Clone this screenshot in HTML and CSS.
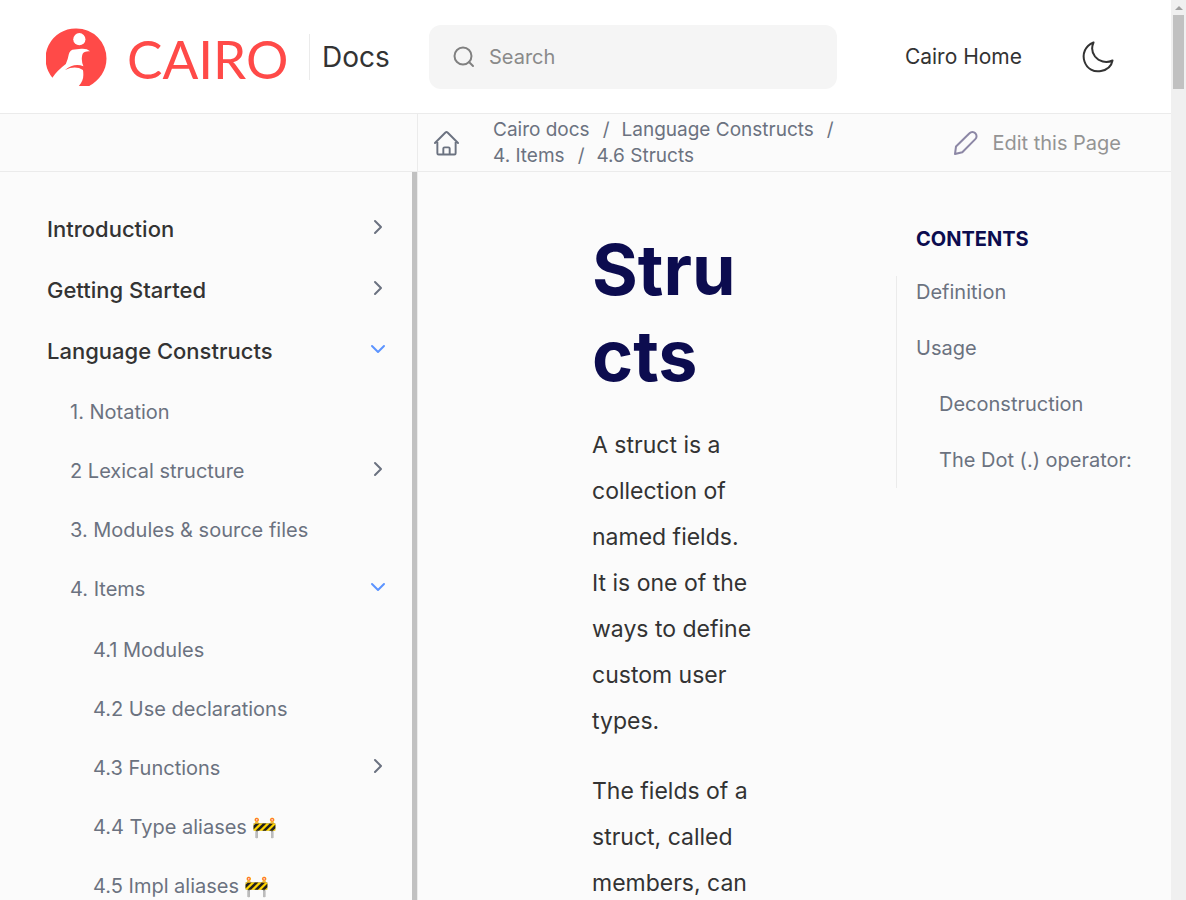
FILE: index.html
```html
<!DOCTYPE html>
<html lang="en">
<head>
<meta charset="utf-8">
<meta name="viewport" content="width=device-width, initial-scale=1">
<title>Structs :: Cairo Docs</title>
<link rel="stylesheet" href="styles.css">
</head>
<body>
<div class="frame">
  <div class="page">
    <header class="header">
      <div class="brand">
        <a class="logo" href="#">
          <svg class="logo-mark" viewBox="0 0 60 57" aria-hidden="true">
            <path fill="#ff4a48" d="M30 0.500A29.500 29.500 0 0 1 59.500 30C59.500 42 52.500 51.500 42.500 57H32.300C35.500 53.500 36.700 50 36.700 46.500Q36.800 43 36.300 41.200Q29 36.500 18.700 41.200Q27.500 34 36.800 37.500Q34.800 33 35.300 28.800Q35.500 24.500 38 23.500Q40.500 22.500 43.300 22.800Q40 20 34.700 20.500L28 21Q23.500 21.200 22.500 25.500Q21.500 31 19.500 35.500Q11 42 6.300 48.800A29.500 29.500 0 0 1 30 0.500Z"/>
            <circle cx="32.800" cy="11" r="6" fill="#fff"/>
          </svg>
          <span class="logo-word">CAIRO</span>
        </a>
        <a class="docs" href="#">Docs</a>
      </div>
      <label class="search">
        <svg class="search-icon" viewBox="0 0 22 22" aria-hidden="true"><circle cx="10" cy="10" r="8.500"/><path d="M16 16l4 4"/></svg>
        <input class="search-input" type="text" placeholder="Search" aria-label="Search">
      </label>
      <a class="home-link" href="#">Cairo Home</a>
      <button class="theme" type="button" aria-label="Dark theme">
        <svg viewBox="0 0 32 32" aria-hidden="true"><path d="M11.500 1.500C3 5 0 13 2.500 20.500C5 28 12 31.500 19 30C25 28.800 29.500 25 30.500 19.500C24 22.500 17 20.500 13 15.500C10 11.500 9.500 6 11.500 1.500Z"/></svg>
      </button>
    </header>
    <div class="toolbar">
      <div class="toolbar-main">
        <a class="home-icon" href="#" aria-label="Home">
          <svg viewBox="0 0 26 26" aria-hidden="true"><path d="M1 12.500L11.900 1.600a1.500 1.500 0 0 1 2.200 0L25 12.500M3.500 10v13.200a1.300 1.300 0 0 0 1.300 1.300h16.400a1.300 1.300 0 0 0 1.300-1.300V10M9.700 24.500v-6.200a1.300 1.300 0 0 1 1.300-1.300h4a1.300 1.300 0 0 1 1.300 1.300v6.200"/></svg>
        </a>
        <nav aria-label="Breadcrumb" class="crumbs">
          <ul class="crumb-list">
            <li class="crumb"><a href="#">Cairo docs</a></li>
            <li class="crumb"><a href="#">Language Constructs</a></li>
            <li class="crumb"><a href="#">4. Items</a></li>
            <li class="crumb"><a href="#">4.6 Structs</a></li>
          </ul>
        </nav>
        <a class="edit" href="#">
          <svg class="edit-icon" viewBox="0 0 24 24" aria-hidden="true"><path d="M1 23l1-7.500L15.500 2.300a4 4 0 0 1 5.800 0a4 4 0 0 1 0 5.800L8.300 21.300Z"/></svg>
          Edit this Page
        </a>
      </div>
    </div>
    <div class="body">
      <nav class="sidebar" aria-label="Documentation">
        <ul class="nav-list">
          <li><a class="nav-link top" href="#">Introduction<svg class="chev" viewBox="0 0 16 16"><path d="M5 2l6 6-6 6"/></svg></a></li>
          <li><a class="nav-link top" href="#">Getting Started<svg class="chev" viewBox="0 0 16 16"><path d="M5 2l6 6-6 6"/></svg></a></li>
          <li><a class="nav-link top" href="#">Language Constructs<svg class="chev open" viewBox="0 0 16 16"><path d="M2 5l6 6 6-6"/></svg></a>
            <ul class="nav-list nested">
              <li><a class="nav-link" href="#">1. Notation</a></li>
              <li><a class="nav-link" href="#">2 Lexical structure<svg class="chev" viewBox="0 0 16 16"><path d="M5 2l6 6-6 6"/></svg></a></li>
              <li><a class="nav-link" href="#">3. Modules &amp; source files</a></li>
              <li><a class="nav-link" href="#">4. Items<svg class="chev open" viewBox="0 0 16 16"><path d="M2 5l6 6 6-6"/></svg></a>
                <ul class="nav-list nested">
                  <li><a class="nav-link" href="#">4.1 Modules</a></li>
                  <li><a class="nav-link" href="#">4.2 Use declarations</a></li>
                  <li><a class="nav-link" href="#">4.3 Functions<svg class="chev" viewBox="0 0 16 16"><path d="M5 2l6 6-6 6"/></svg></a></li>
                  <li><a class="nav-link" href="#">4.4 Type aliases 🚧</a></li>
                  <li><a class="nav-link" href="#">4.5 Impl aliases 🚧</a></li>
                </ul>
              </li>
            </ul>
          </li>
        </ul>
      </nav>
      <main class="main">
        <article class="article">
          <h1>Structs</h1>
          <p>A struct is a collection of named fields. It is one of the ways to define custom user types.</p>
          <p>The fields of a struct, called members, can</p>
        </article>
        <aside class="toc">
          <h2>Contents</h2>
          <ul class="toc-list">
            <li><a href="#">Definition</a></li>
            <li><a href="#">Usage</a></li>
            <li class="sub"><a href="#">Deconstruction</a></li>
            <li class="sub"><a href="#">The Dot (.) operator:</a></li>
          </ul>
        </aside>
      </main>
    </div>
  </div>
  <div class="scrollbar" aria-hidden="true">
    <div class="scroll-arrow"></div>
    <div class="scroll-thumb"></div>
  </div>
</div>
</body>
</html>
```
FILE: styles.css
```css
* { box-sizing: border-box; }
body {
  margin: 0;
  font-family: Inter, "Liberation Sans", "Noto Color Emoji", sans-serif;
  font-size: 20px;
  color: #333;
  background: #fbfbfb;
}
a { color: inherit; text-decoration: none; }
ul { list-style: none; margin: 0; padding: 0; }
svg { display: block; fill: none; stroke: currentColor; stroke-linecap: round; stroke-linejoin: round; }

.frame { display: flex; height: 100vh; overflow: hidden; }
.page { flex: 1; min-width: 0; display: flex; flex-direction: column; }

.header {
  display: flex;
  align-items: center;
  flex: none;
  height: 114px;
  padding: 0 57px 0 46px;
  background: #fff;
  border-bottom: 1px solid #ebebeb;
}
.brand { display: flex; align-items: center; width: 383px; }
.logo { display: flex; align-items: center; gap: 20px; width: 263px; color: #ff4a48; }
.logo-mark { width: 61px; height: 58px; stroke: none; }
.logo-word { font: 53px/56px Lato, "Liberation Sans", sans-serif; padding-top: 4px; }
.docs { border-left: 1px solid #ebebeb; padding-left: 12px; font-size: 28px; line-height: 46px; }
.search {
  display: flex;
  align-items: center;
  gap: 14px;
  flex: 1;
  max-width: 408px;
  height: 64px;
  padding: 0 24px;
  border-radius: 12px;
  background: #f5f5f5;
  color: #808080;
}
.search-icon { width: 22px; height: 22px; flex: none; stroke-width: 2; }
.search-input { flex: 1; min-width: 0; border: 0; padding: 0; background: none; outline: 0; font: inherit; color: inherit; }
.search-input::placeholder { color: #8a8a8a; opacity: 1; }
.home-link { margin-left: auto; margin-right: 60px; font-size: 21px; }
.theme { border: 0; padding: 0; background: none; color: #333; }
.theme svg { width: 32px; height: 32px; stroke-width: 2; }

.toolbar { flex: none; display: flex; height: 58px; border-bottom: 1px solid #ebebeb; }
.toolbar-main {
  display: flex;
  align-items: center;
  flex: 1;
  margin-left: 417px;
  border-left: 1px solid #ebebeb;
  padding: 1px 50px 0 16px;
  color: #6b7280;
}
.home-icon svg { width: 25px; height: 25px; stroke-width: 2; }
.crumbs { flex: 1; min-width: 0; margin: 0 48px 0 34px; font-size: 19px; line-height: 26px; }
.crumb-list { display: flex; flex-wrap: wrap; }
.crumb:not(:last-child)::after { content: "/"; padding: 0 12px 0 13px; }
.edit { display: flex; align-items: center; gap: 14px; white-space: nowrap; color: #949494; }
.edit-icon { width: 24px; height: 24px; stroke-width: 2; color: #8c87a5; }

.body { flex: 1; min-height: 0; display: flex; overflow: hidden; }
.sidebar {
  flex: none;
  width: 418px;
  border-right: 1px solid #ebebeb;
  box-shadow: inset -5px 0 #c1c1c1;
  padding: 26px 31px 0 47px;
  overflow: hidden;
}
.nav-link { display: flex; align-items: center; height: 59px; color: #6b7280; white-space: nowrap; }
.nav-link.top { height: 61px; font-size: 22px; font-weight: 500; color: #333; }
.nested { padding-left: 23px; padding-top: 1px; }
.nested .nested { padding-top: 2px; }
.chev { width: 16px; height: 16px; margin-left: auto; margin-bottom: 4px; stroke-width: 2; color: #6b7280; }
.chev.open { color: #5c94ff; }

.main { flex: 1; min-width: 0; display: flex; align-items: flex-start; }
.article { flex: 1; min-width: 0; padding: 55px 139px 0 174px; font-size: 23px; line-height: 46px; }
.article h1 { margin: 0 0 23px; font-size: 70px; line-height: 86px; font-weight: 700; color: #0c0c4f; overflow-wrap: anywhere; }
.article p { margin: 0 0 24px; }
.toc { flex: none; width: 275px; padding-top: 52px; }
.toc h2 { margin: 0 0 22px; padding-left: 20px; font-size: 20px; line-height: 30px; font-weight: 700; text-transform: uppercase; color: #0c0c4f; }
.toc-list { display: flex; flex-direction: column; gap: 24px; border-left: 1px solid #ebebeb; padding: 0 0 12px 19px; line-height: 32px; color: #6b7280; white-space: nowrap; }
.sub { padding-left: 23px; }

.scrollbar { flex: none; width: 15px; background: #f0f0f0; }
.scroll-arrow { height: 15px; padding: 6px 4px 0 4px; }
.scroll-arrow::before { content: ""; display: block; width: 0; border: 4px solid transparent; border-top: 0; border-bottom-color: #a0a0a0; }
.scroll-thumb { height: 74px; margin: 0 2px; background: #c1c1c1; }
```
